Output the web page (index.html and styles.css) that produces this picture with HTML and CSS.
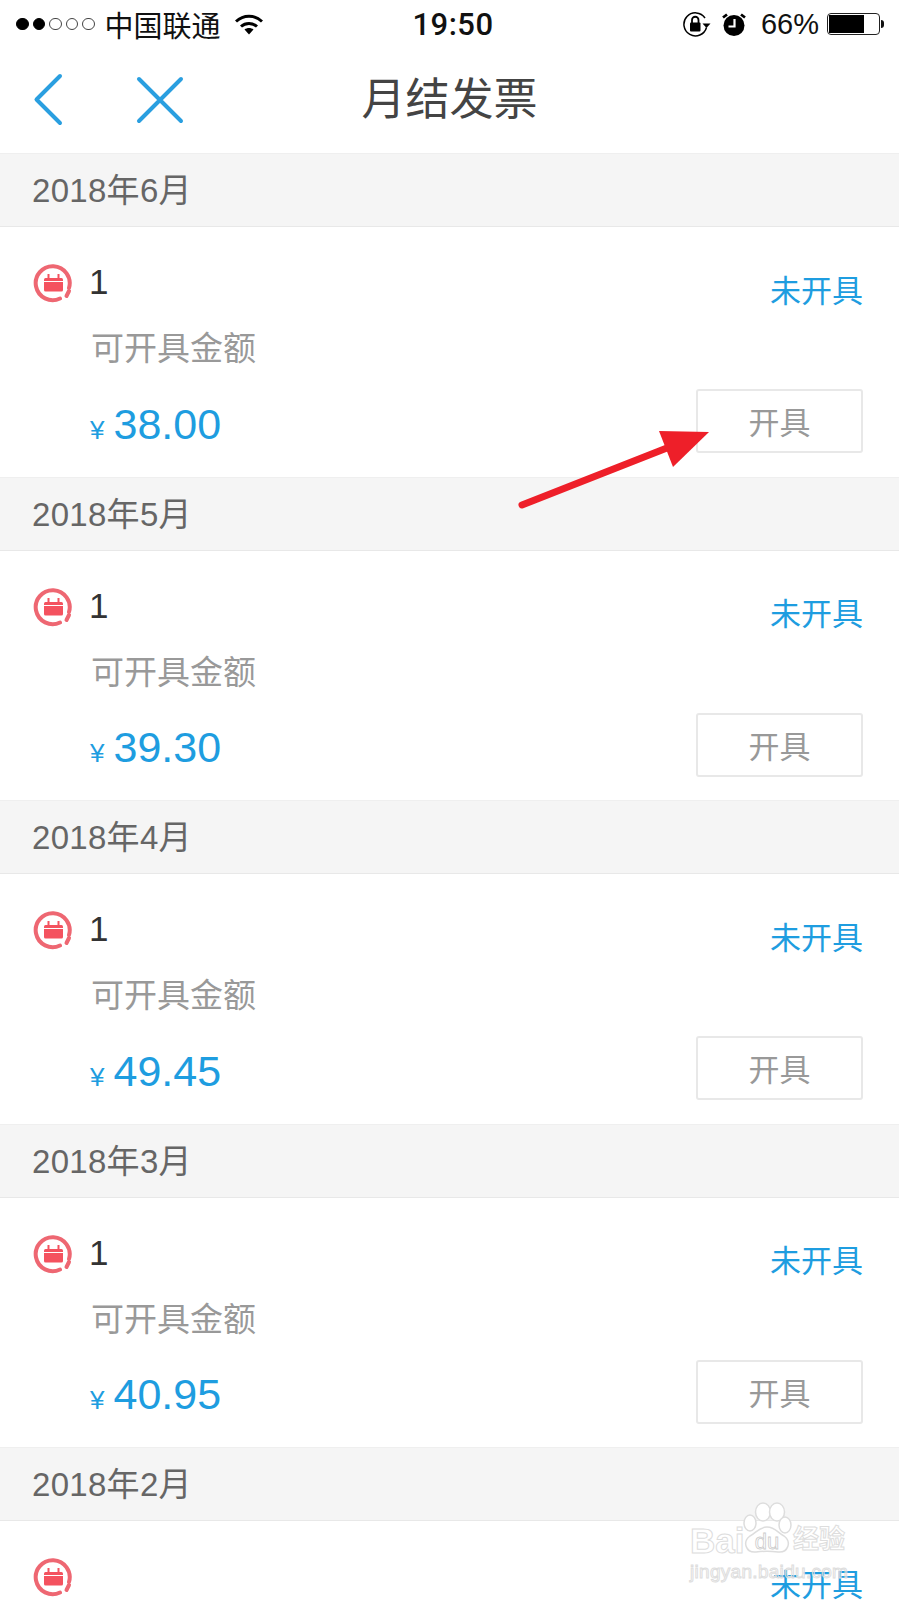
FILE: index.html
```html
<!DOCTYPE html>
<html lang="zh-CN">
<head>
    <meta charset="UTF-8">
    <meta name="viewport" content="width=device-width, initial-scale=1.0">
    <title>月结发票</title>
    <link rel="stylesheet" href="styles.css">
</head>
<body>
    <div class="status-bar">
        <div class="status-left">
            <span class="signal"><i class="on"></i><i class="on"></i><i></i><i></i><i></i></span>
            <span class="carrier">中国联通</span>
            <svg class="wifi" width="28" height="21" viewBox="0 0 28 21"><path d="M1 7.500C8.500 .5 19.500 .5 27 7.500" fill="none" stroke="#000" stroke-width="3"/><path d="M6 12.500C10.500 8.500 17.500 8.500 22 12.500" fill="none" stroke="#000" stroke-width="3"/><path d="M9.500 15.500C12 13.500 16 13.500 18.500 15.500L14 20.500Z" fill="#000"/></svg>
        </div>
        <div class="status-time">19:50</div>
        <div class="status-right">
            <svg class="lock" width="28" height="25" viewBox="0 0 28 25"><path d="M23.500 15.500A11.500 11.500 0 1 1 22 6" fill="none" stroke="#000" stroke-width="1.500"/><path d="M19.500 11.500H27.500L23.500 16Z" fill="#000"/><rect x="7" y="10.500" width="10.500" height="9" rx="1" fill="#000"/><path d="M9 11V8a3.200 3.200 0 0 1 6.500 0V11" fill="none" stroke="#000" stroke-width="1.800"/></svg>
            <svg class="alarm" width="24" height="23" viewBox="0 0 24 23"><circle cx="12" cy="12.500" r="10.500" fill="#000"/><path d="M12.500 6V13.500H6.500" fill="none" stroke="#fff" stroke-width="2.200"/><path d="M1 4.500L5 1.500M23 4.500L19 1.500" stroke="#000" stroke-width="2.800"/></svg>
            <span class="percent">66%</span>
            <span class="battery"><span class="battery-fill"></span></span>
            <span class="battery-nub"></span>
        </div>
    </div>

    <nav class="nav-bar">
        <div class="nav-icons">
            <svg width="30" height="54" viewBox="0 0 30 54"><path d="M27 3L3.500 26.500L27 50" fill="none" stroke="#2a9fe0" stroke-width="4" stroke-linecap="round" stroke-linejoin="round"/></svg>
            <svg class="nav-close" width="48" height="48" viewBox="0 0 48 48"><path d="M3 3L45 45M45 3L3 45" fill="none" stroke="#2a9fe0" stroke-width="4" stroke-linecap="round"/></svg>
        </div>
        <h1 class="nav-title">月结发票</h1>
        <div></div>
    </nav>

    <div id="invoice-list"></div>

    <!-- red arrow annotation on the first button -->
    <svg class="arrow" width="899" height="600" viewBox="0 0 899 600"><path d="M522 505L672 446" stroke="#ee1f29" stroke-width="7" stroke-linecap="round"/><path d="M659 431L709 432L673 467Z" fill="#ee1f29"/></svg>

    <div class="watermark">
        <div class="wm-top">
            <span class="wm-latin">Bai</span>
            <svg class="wm-paw" width="50" height="52" viewBox="0 0 50 52"><g fill="#fff" stroke="#ddd" stroke-width="1.500"><ellipse cx="8" cy="21" rx="6" ry="8"/><ellipse cx="21" cy="10" rx="7.500" ry="9"/><ellipse cx="35" cy="10" rx="7.500" ry="9"/><ellipse cx="43" cy="23" rx="6" ry="8"/><path d="M25 25C33 25 36 31 42 34C50 40 46 51 36 50C28 49 22 49 14 50C4 51 0 40 8 34C14 31 17 25 25 25Z"/></g><text class="wm-du" x="25" y="47" text-anchor="middle">du</text></svg>
            <span class="wm-cjk">经验</span>
        </div>
        <div class="wm-url">jingyan.baidu.com</div>
    </div>

    <script>
        const months = [
            { month: '2018年6月', name: '1', amount: '38.00' },
            { month: '2018年5月', name: '1', amount: '39.30' },
            { month: '2018年4月', name: '1', amount: '49.45' },
            { month: '2018年3月', name: '1', amount: '40.95' },
            { month: '2018年2月', name: '', amount: '' }
        ];
        const icon = `<svg class="card-icon" width="40" height="40" viewBox="0 0 40 40">
            <path d="M36 25A17 17 0 1 0 27 35.500" fill="none" stroke="#ee6772" stroke-width="4" stroke-linecap="round"/>
            <path d="M36 28L33.500 33" stroke="#ee6772" stroke-width="4" stroke-linecap="round"/>
            <rect x="11" y="15" width="19" height="13.500" rx="1.500" fill="#f4525f"/>
            <path d="M15.500 11V15M25.500 11V15" stroke="#f4525f" stroke-width="2"/>
            <path d="M11 18.500H30" stroke="#fff" stroke-width="1"/>
        </svg>`;
        document.getElementById('invoice-list').innerHTML = months.map(item => `
            <section class="month">
                <div class="month-header">${item.month}</div>
                <div class="card">
                    <div class="card-top">
                        ${icon}
                        <span class="card-name">${item.name}</span>
                        <span class="card-status">未开具</span>
                    </div>
                    ${item.amount ? `
                    <div class="card-label">可开具金额</div>
                    <div class="card-bottom">
                        <span class="card-amount"><small>¥</small>${item.amount}</span>
                        <button class="issue-btn">开具</button>
                    </div>` : ''}
                </div>
            </section>
        `).join('');
    </script>
</body>
</html>
```

FILE: styles.css
```css
html, body {
    margin: 0;
    padding: 0;
    height: 1600px;
    overflow: hidden;
    background: white;
    font-family: "Liberation Sans", "Noto Sans CJK SC", sans-serif;
}
.status-bar {
    height: 46px;
    padding: 2px 15px 0 16px;
    box-sizing: border-box;
    display: grid;
    grid-template-columns: 1fr auto 1fr;
    align-items: center;
    color: #111;
}
.status-left, .status-right {
    display: flex;
    align-items: center;
}
.signal {
    display: flex;
    gap: 4px;
}
.signal i {
    width: 12.500px;
    height: 12.500px;
    box-sizing: border-box;
    border: 1px solid #444;
    border-radius: 50%;
}
.signal i.on {
    background: black;
    border-color: black;
}
.carrier {
    font-size: 29px;
    margin-left: 10px;
}
.wifi {
    margin-left: 14px;
}
.status-time {
    font-family: Roboto, sans-serif;
    font-size: 31px;
    font-weight: 500;
    letter-spacing: 0.500px;
    margin-left: 6px;
}
.status-right {
    justify-content: flex-end;
}
.alarm {
    margin-left: 11px;
}
.percent {
    font-size: 29px;
    margin-left: 15px;
}
.battery {
    width: 53px;
    height: 22px;
    margin-left: 8px;
    box-sizing: border-box;
    border: 1px solid #222;
    border-radius: 4px;
    padding: 1px;
    display: block;
}
.battery-fill {
    display: block;
    width: 35px;
    height: 18px;
    background: black;
}
.battery-nub {
    width: 3px;
    height: 8px;
    margin-left: 1px;
    background: #111;
    border-radius: 0 4px 4px 0;
}
.nav-bar {
    height: 107px;
    display: grid;
    grid-template-columns: 1fr auto 1fr;
    align-items: center;
}
.nav-icons {
    display: flex;
    align-items: center;
    padding-left: 33px;
}
.nav-close {
    margin-left: 73px;
}
.nav-title {
    margin: 0;
    font-size: 44px;
    font-weight: normal;
    color: #444;
    line-height: 60px;
}
.month-header {
    height: 74px;
    box-sizing: border-box;
    padding-left: 32px;
    line-height: 74px;
    font-size: 33px;
    letter-spacing: 0.300px;
    color: #666;
    background: #f5f5f5;
    border-top: 1px solid #efefef;
    border-bottom: 1px solid #e8e8e8;
}
.card {
    height: 249.500px;
    box-sizing: border-box;
    padding: 36px 36px 0 33px;
    background: white;
}
.card-top {
    height: 40px;
    display: flex;
    align-items: center;
}
.card-name {
    font-size: 35px;
    color: #333;
    margin-left: 16px;
    margin-top: -2px;
}
.card-status {
    margin-left: auto;
    margin-top: 10px;
    font-size: 31px;
    color: #1e9de0;
}
.card-label {
    margin: 24px 0 0 58px;
    font-size: 33px;
    line-height: 44px;
    color: #999;
}
.card-bottom {
    margin: 18px 0 0 57px;
    display: flex;
    justify-content: space-between;
    align-items: center;
}
.card-amount {
    font-size: 43px;
    color: #1e9de0;
    margin-top: 6px;
}
.card-amount small {
    font-size: 26px;
    margin-right: 9px;
}
.issue-btn {
    width: 167px;
    height: 64px;
    padding: 0 0 1px;
    background: white;
    border: 2px solid #e8e8e8;
    border-radius: 3px;
    font-family: inherit;
    font-size: 31px;
    color: #999;
}
.arrow {
    position: absolute;
    left: 0;
    top: 0;
}
.watermark {
    position: absolute;
    left: 690px;
    top: 1502px;
    color: rgba(255, 255, 255, 0.6);
    -webkit-text-stroke: 1px #ddd;
}
.wm-top {
    display: flex;
    align-items: flex-end;
}
.wm-latin {
    font-size: 35px;
    font-weight: bold;
    line-height: 26px;
    width: 52px;
}
.wm-du {
    font-size: 22px;
    fill: #fff;
    stroke: #ccc;
    stroke-width: 0.800px;
}
.wm-cjk {
    font-size: 26px;
    font-weight: bold;
    line-height: 30px;
    margin-left: 1px;
}
.wm-url {
    font-size: 19px;
    line-height: 22px;
    margin-top: 7px;
    color: transparent;
    letter-spacing: 0.300px;
}
```
